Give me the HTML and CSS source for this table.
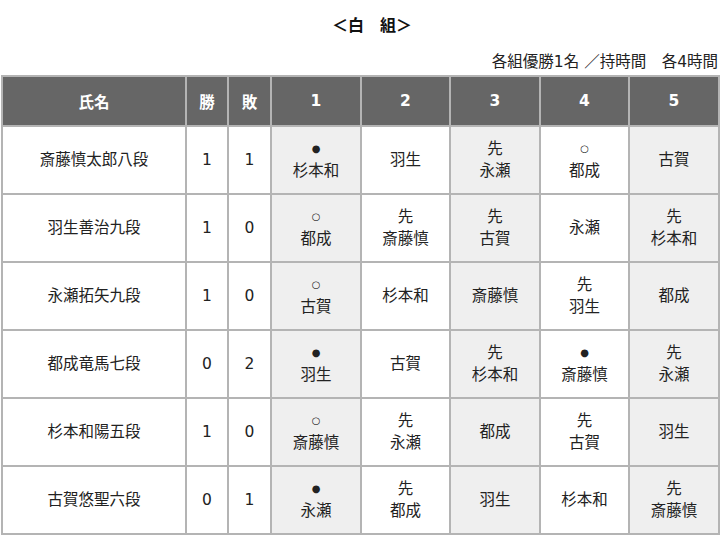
FILE: index.html
```html
<!DOCTYPE html>
<html lang="ja">
<head>
<meta charset="utf-8">
<title>白組</title>
<link rel="stylesheet" href="styles.css">
</head>
<body>
<h1 class="title">＜白　組＞</h1>
<p class="note">各組優勝1名 ／持時間　各4時間</p>
<div class="grid">
  <div class="hd">氏名</div><div class="hd">勝</div><div class="hd">敗</div>
  <div class="hd">1</div><div class="hd">2</div><div class="hd">3</div><div class="hd">4</div><div class="hd">5</div>

  <div class="c">斎藤慎太郎八段</div><div class="c">1</div><div class="c">1</div>
  <div class="c s"><span class="m">●</span><span>杉本和</span></div><div class="c">羽生</div><div class="c s"><span>先</span><span>永瀬</span></div><div class="c"><span class="m">○</span><span>都成</span></div><div class="c s">古賀</div>

  <div class="c">羽生善治九段</div><div class="c">1</div><div class="c">0</div>
  <div class="c s"><span class="m">○</span><span>都成</span></div><div class="c"><span>先</span><span>斎藤慎</span></div><div class="c s"><span>先</span><span>古賀</span></div><div class="c">永瀬</div><div class="c s"><span>先</span><span>杉本和</span></div>

  <div class="c">永瀬拓矢九段</div><div class="c">1</div><div class="c">0</div>
  <div class="c s"><span class="m">○</span><span>古賀</span></div><div class="c">杉本和</div><div class="c s">斎藤慎</div><div class="c"><span>先</span><span>羽生</span></div><div class="c s">都成</div>

  <div class="c">都成竜馬七段</div><div class="c">0</div><div class="c">2</div>
  <div class="c s"><span class="m">●</span><span>羽生</span></div><div class="c">古賀</div><div class="c s"><span>先</span><span>杉本和</span></div><div class="c"><span class="m">●</span><span>斎藤慎</span></div><div class="c s"><span>先</span><span>永瀬</span></div>

  <div class="c">杉本和陽五段</div><div class="c">1</div><div class="c">0</div>
  <div class="c s"><span class="m">○</span><span>斎藤慎</span></div><div class="c"><span>先</span><span>永瀬</span></div><div class="c s">都成</div><div class="c"><span>先</span><span>古賀</span></div><div class="c s">羽生</div>

  <div class="c">古賀悠聖六段</div><div class="c">0</div><div class="c">1</div>
  <div class="c s"><span class="m">●</span><span>永瀬</span></div><div class="c"><span>先</span><span>都成</span></div><div class="c s">羽生</div><div class="c">杉本和</div><div class="c s"><span>先</span><span>斎藤慎</span></div>
</div>
</body>
</html>
```
FILE: styles.css
```css
html, body {
  margin: 0;
  padding: 0;
  background: #fff;
}
body {
  font-family: "DejaVu Sans", "Noto Sans CJK JP", sans-serif;
  color: #222;
}
.title {
  margin: 0;
  height: 50px;
  line-height: 51px;
  font-size: 16px;
  font-weight: bold;
  text-align: center;
  padding-left: 24px;
  color: #111;
}
.note {
  margin: 0;
  height: 25px;
  line-height: 25px;
  font-size: 15.5px;
  text-align: right;
  padding-right: 2px;
}
.grid {
  margin-left: 1px;
  width: 719px;
  box-sizing: border-box;
  display: grid;
  grid-template-columns: 182px 40px 41px 88px 87px 88px 87px 88px;
  grid-template-rows: 48px repeat(6, 66px);
  gap: 2px;
  padding: 2px;
  background: #b4b4b4;
}
.hd {
  background: #666;
  color: #fff;
  font-weight: bold;
  font-size: 15.5px;
  display: flex;
  align-items: center;
  justify-content: center;
}
.c {
  background: #fff;
  font-size: 15.5px;
  line-height: 22px;
  display: flex;
  flex-direction: column;
  align-items: center;
  justify-content: center;
  text-align: center;
}
.c.s { background: #efefef; }
.m {
  font-size: 10px;
  line-height: 22px;
}
```
